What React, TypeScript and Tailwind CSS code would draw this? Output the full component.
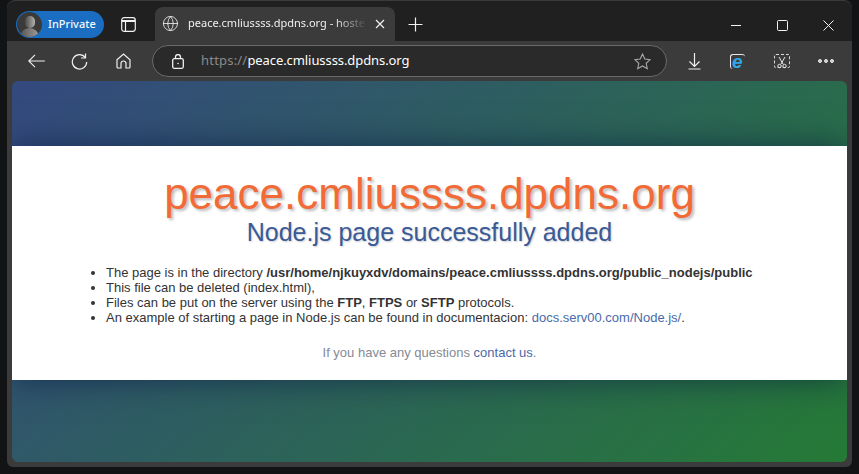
import React from 'react';
import { Globe } from 'lucide-react';

const Stroke: React.FC<{ w: number; h: number; sw?: number; className?: string; children: React.ReactNode }> = ({ w, h, sw = 1.2, className, children }) => (
  <svg width={w} height={h} viewBox={`0 0 ${w} ${h}`} fill="none" stroke="currentColor" strokeWidth={sw} className={`shrink-0 ${className ?? ''}`}>
    {children}
  </svg>
);

const App: React.FC = () => {
  return (
    <div className="h-[474px] w-[859px] overflow-hidden bg-[#111315] pl-[7px] pr-[7px] pb-[7px] font-['Liberation_Sans',sans-serif]">
      <div className="flex h-full flex-col overflow-hidden rounded-t-[8px] rounded-b-[6px] border-t border-[#3a3a3a] bg-[#3b3b3b]">
        {/* Title bar */}
        <div className="flex h-[40px] items-end bg-[#202020] pl-[9px]">
          <div className="mb-[3px] flex h-[27px] w-[88px] items-center rounded-full bg-[#1a6dc0] pl-[1px] font-['Noto_Sans',sans-serif] text-[11px] font-medium text-[#f4f8fc]">
            <div className="relative mr-[6px] h-[25px] w-[25px] overflow-hidden rounded-full bg-[#3a3a3a]">
              <div className="absolute left-[8px] top-[4px] h-[12px] w-[10px] rounded-full bg-[linear-gradient(to_right,#4a4a4a,#b5b2ae)]" />
              <div className="absolute left-[3px] top-[16px] h-[12px] w-[19px] rounded-t-full bg-[linear-gradient(to_right,#555,#a09c98)]" />
            </div>
            InPrivate
          </div>
          <Stroke w={15} h={15} className="mb-[9px] ml-[17px] text-[#f2f2f2]">
            <rect x="0.7" y="0.7" width="13.6" height="13.6" rx="2.5" />
            <path d="M1 4h13" strokeWidth="2" />
            <path d="M4.5 4v10" />
          </Stroke>
          <div className="ml-[19px] flex h-[34px] w-[240px] items-center rounded-t-[8px] bg-[#3b3b3b] pl-[7px] pb-[1px] text-[#f0f0f0]">
            <Globe size={17} strokeWidth={1.2} className="shrink-0" />
            <span className="ml-[9px] w-[179px] shrink-0 overflow-hidden whitespace-nowrap font-['Noto_Sans',sans-serif] text-[11px] [mask-image:linear-gradient(to_right,black_82%,transparent)]">
              peace.cmliussss.dpdns.org - hoste
            </span>
            <Stroke w={10} h={10} sw={1.2} className="ml-[8px]">
              <path d="M1 1l8 8M9 1l-8 8" />
            </Stroke>
          </div>
          <Stroke w={15} h={15} sw={1.2} className="mb-[9px] ml-[13px] text-[#f2f2f2]">
            <path d="M7.5 0.5v14M0.5 7.5h14" />
          </Stroke>
          <div className="flex-1" />
          <div className="mb-[10px] flex items-center text-[#f2f2f2]">
            <Stroke w={10} h={11} sw={1}>
              <path d="M0 5.5h10" />
            </Stroke>
            <Stroke w={11} h={11} sw={1} className="ml-[36px]">
              <rect x="0.5" y="0.5" width="10" height="10" rx="1" />
            </Stroke>
            <Stroke w={11} h={11} sw={1} className="ml-[35px] mr-[18px]">
              <path d="M0.5 0.5l10 10M10.5 0.5l-10 10" />
            </Stroke>
          </div>
        </div>

        {/* Toolbar */}
        <div className="flex h-[40px] items-center pl-[21px] text-[#f0f0f0]">
          <Stroke w={17} h={14} sw={1.1}>
            <path d="M0.8 7h16M7 0.8L0.8 7L7 13.2" />
          </Stroke>
          <Stroke w={17} h={17} sw={1.2} className="ml-[26px]">
            <path d="M14.5 0.5v4.5h-4.5" />
            <path d="M14.3 4.6A7.2 7.2 0 1 0 15.7 9" />
          </Stroke>
          <Stroke w={15} h={16} sw={1.2} className="ml-[28px]">
            <path d="M1 6.8L7.5 1L14 6.8V14a1 1 0 0 1-1 1H10V10.5a2.5 2.5 0 0 0-5 0V15H2a1 1 0 0 1-1-1Z" />
          </Stroke>
          <div className="ml-[21px] flex h-[32px] w-[515px] items-center rounded-full border border-[#6a6a6a] bg-[#2a2a2a] pl-[19px] pr-[15px]">
            <Stroke w={12} h={15} sw={1.3}>
              <rect x="0.7" y="4.7" width="10.6" height="9.6" rx="1.5" />
              <path d="M3.5 4.5V3a2.5 2.5 0 0 1 5 0v1.5" />
              <circle cx="6" cy="9.5" r="0.8" fill="currentColor" stroke="none" />
            </Stroke>
            <span className="ml-[17px] font-['Noto_Sans',sans-serif] text-[13px] text-[#8a8a8a]">
              <span className="tracking-[0.2px]">https://</span><span className="tracking-[-0.08px] text-white">peace.cmliussss.dpdns.org</span>
            </span>
            <svg width="17" height="17" viewBox="0 0 17 17" fill="none" stroke="#a8a8a8" strokeWidth="1.1" className="ml-auto shrink-0">
              <path d="M8.5 1l2.3 5 5.4.6-4 3.7 1.1 5.4-4.8-2.7-4.8 2.7 1.1-5.4-4-3.7 5.4-.6Z" />
            </svg>
          </div>
          <Stroke w={13} h={17} sw={1.2} className="ml-[21px]">
            <path d="M6.5 0v13M1.5 8.5l5 5 5-5" />
            <path d="M0.5 16h12" />
          </Stroke>
          <div className="relative ml-[29px] h-[15px] w-[15px] rounded-[3px] border-l border-t border-[#e8e8e8]">
            <span className="absolute left-[1px] top-[-3px] font-['Liberation_Sans',sans-serif] text-[19px] font-bold italic leading-[19px] text-[#2ea8e8]">e</span>
          </div>
          <div className="relative ml-[29px] h-[14px] w-[16px] rounded-[2px] border border-dashed border-[#d8d8d8]">
            <svg width="12" height="13" viewBox="0 0 12 13" fill="none" stroke="#e8e8e8" strokeWidth="1" className="absolute left-[1px] top-[1px]">
              <path d="M3 1l4 7M9 1l-4 7" />
              <circle cx="3.5" cy="10" r="1.7" />
              <circle cx="8.5" cy="10" r="1.7" />
            </svg>
          </div>
          <div className="ml-[29px] flex gap-[4px]">
            <span className="h-[2px] w-[2px] rounded-full bg-[#f0f0f0] outline outline-[0.5px] outline-[#f0f0f0]" />
            <span className="h-[2px] w-[2px] rounded-full bg-[#f0f0f0] outline outline-[0.5px] outline-[#f0f0f0]" />
            <span className="h-[2px] w-[2px] rounded-full bg-[#f0f0f0] outline outline-[0.5px] outline-[#f0f0f0]" />
          </div>
        </div>

        {/* Page */}
        <div className="mx-[5px] h-[381px] overflow-hidden rounded-[6px] bg-[linear-gradient(135deg,#34497f,#257a36)] pt-[65px]">
          <div className="h-[234px] bg-white pt-[25px] text-center shadow-[0_0_30px_rgba(0,15,60,0.55)]">
            <h1 className="text-[44px] leading-[46px] text-[#f26a36] [text-shadow:2px_2px_3px_rgba(0,0,0,0.28)]">
              peace.cmliussss.dpdns.org
            </h1>
            <h2 className="text-[25px] leading-[30px] text-[#3a5a96] [text-shadow:1px_1px_2px_rgba(0,0,0,0.2)]">
              Node.js page successfully added
            </h2>
            <ul className="mt-[18px] list-disc pl-[94px] text-left text-[13px] leading-[15px] text-[#333333]">
              <li>The page is in the directory <b>/usr/home/njkuyxdv/domains/peace.cmliussss.dpdns.org/public_nodejs/public</b></li>
              <li>This file can be deleted (index.html),</li>
              <li>Files can be put on the server using the <b>FTP</b>, <b>FTPS</b> or <b>SFTP</b> protocols.</li>
              <li>An example of starting a page in Node.js can be found in documentacion: <a className="text-[#4a6aa8]">docs.serv00.com/Node.js/</a>.</li>
            </ul>
            <p className="mt-[20px] text-[13px] leading-[15px] text-[#858a96]">
              If you have any questions <a className="text-[#4a6aa8]">contact us</a>.
            </p>
          </div>
        </div>
      </div>
    </div>
  );
};

export default App;
